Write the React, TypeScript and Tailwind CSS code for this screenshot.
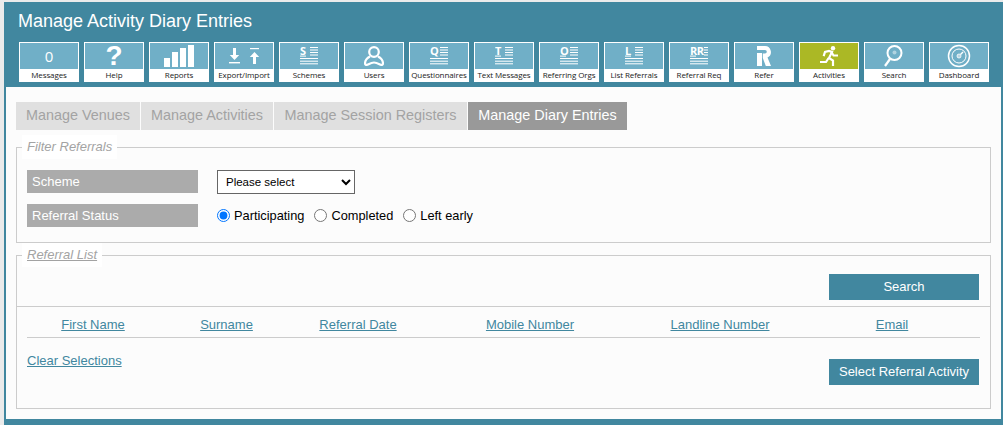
import React from 'react'

const teal = 'bg-[#41879f]'

// letter plus the ruled lines, shared by the list style icons
const Lines = ({ letter, wide, under }: { letter: string; wide?: boolean; under?: boolean }) => {
  const x = wide ? 14 : 10
  return (
    <svg width="18" height="26" viewBox="0 -3 18 26" fill="#fff">
      <text x="0" y="9" fontFamily="Open Sans, sans-serif" fontSize="11" fontWeight="700" letterSpacing={wide ? '-0.4' : '0'}>
        {letter}
      </text>
      {under && <rect x="0" y="9.600" width="6" height="1" />}
      <rect x={x} y="1" width={18 - x} height="1" />
      <rect x={x} y="3.500" width={18 - x} height="1" />
      <rect x={x} y="6" width={18 - x} height="1" />
      <rect x={x} y="8.500" width={18 - x} height="1" />
      <rect x="0" y="12" width="18" height="1" />
      <rect x="0" y="14.700" width="18" height="1" />
      <rect x="0" y="17.300" width="18" height="1" />
    </svg>
  )
}

const Bars = () => (
  <svg width="30" height="22" viewBox="0 0 30 22" fill="#fff">
    <rect x="0" y="13" width="6" height="9" />
    <rect x="8" y="7" width="6" height="15" />
    <rect x="16" y="3" width="6" height="19" />
    <rect x="24" y="0" width="6" height="22" />
  </svg>
)

const ExportImport = () => (
  <svg width="32" height="18" viewBox="0 0 32 18" fill="#fff">
    <path d="M5 1h3v7h3.200L6.500 13 1.800 8H5z" />
    <rect x="1" y="15" width="11" height="1.400" />
    <rect x="22" y="1" width="9" height="1.200" />
    <path d="M26.500 5l4.700 5H28v7h-3v-7h-3.200z" />
  </svg>
)

const User = () => (
  <svg width="20" height="20" viewBox="0 0 20 20" fill="none" stroke="#fff" strokeWidth="2.200">
    <circle cx="10" cy="6" r="4.800" />
    <path d="M6 10.500C3 12 1 15 1 17.500c0 1.500 1.500 1.800 3 1C6 17.500 8 16.500 10 16.500s4 1 6 2c1.500.8 3 .5 3-1 0-2.500-2-5.500-5-7" />
  </svg>
)

const Refer = () => (
  <svg width="14" height="20" viewBox="0 0 14 20" fill="#fff">
    <path d="M0 0h8a6 6 0 0 1 2.500 11.400L14 20H8.800L5.800 12V7.600H8a1.800 1.800 0 0 0 0-3.600H0z" />
    <rect x="0" y="7" width="5" height="13" />
  </svg>
)

const Runner = () => (
  <svg width="18" height="20" viewBox="0 0 18 20" fill="none" stroke="#fff" strokeWidth="2.200" strokeLinecap="square">
    <circle cx="13" cy="2.200" r="2.200" fill="#fff" stroke="none" />
    <path d="M4 9l1-3 4-1 3 1-3 6 4 2.500V19" />
    <path d="M12 7l1.500 2.500H17" />
    <path d="M8 13l-2 3H1" />
  </svg>
)

const Magnifier = () => (
  <svg width="20" height="22" viewBox="0 0 20 22" fill="none" stroke="#fff">
    <circle cx="10.500" cy="8" r="7" strokeWidth="2" />
    <circle cx="10.500" cy="7.500" r="2" fill="#fff" fillOpacity="0.45" stroke="none" />
    <path d="M6 14L1 21" strokeWidth="2.200" />
  </svg>
)

const Gauge = () => (
  <svg width="24" height="24" viewBox="0 0 24 24" fill="none" stroke="#fff">
    <circle cx="12" cy="12" r="10.500" strokeWidth="1.500" />
    <circle cx="12" cy="12" r="7" strokeWidth="1" />
    <circle cx="12" cy="12" r="2" fill="#fff" fillOpacity="0.5" strokeWidth="0.800" />
    <path d="M13.500 10.500L16 8" strokeWidth="1.500" />
  </svg>
)

const tiles: { label: string; icon: React.ReactNode; active?: boolean }[] = [
  { label: 'Messages', icon: <span className="font-['Open_Sans',sans-serif] text-[15px] leading-[26px] text-white">0</span> },
  { label: 'Help', icon: <span className="font-['Liberation_Sans',sans-serif] text-[28px] font-bold leading-[26px] text-white">?</span> },
  { label: 'Reports', icon: <Bars /> },
  { label: 'Export/Import', icon: <ExportImport /> },
  { label: 'Schemes', icon: <Lines letter="S" under /> },
  { label: 'Users', icon: <User /> },
  { label: 'Questionnaires', icon: <Lines letter="Q" /> },
  { label: 'Text Messages', icon: <Lines letter="T" under /> },
  { label: 'Referring Orgs', icon: <Lines letter="O" under /> },
  { label: 'List Referrals', icon: <Lines letter="L" under /> },
  { label: 'Referral Req', icon: <Lines letter="RR" wide under /> },
  { label: 'Refer', icon: <Refer /> },
  { label: 'Activities', icon: <Runner />, active: true },
  { label: 'Search', icon: <Magnifier /> },
  { label: 'Dashboard', icon: <Gauge /> },
]

const tabs = [
  { label: 'Manage Venues', w: 'w-[124px]' },
  { label: 'Manage Activities', w: 'w-[132px]' },
  { label: 'Manage Session Registers', w: 'w-[193px]' },
]

const columns = [
  { label: 'First Name', w: 'w-[132px]' },
  { label: 'Surname', w: 'w-[135px]' },
  { label: 'Referral Date', w: 'w-[128px]' },
  { label: 'Mobile Number', w: 'w-[216px]' },
  { label: 'Landline Number', w: 'w-[164px]' },
  { label: 'Email', w: 'w-[178px] pl-[2px]' },
]

const Tile = ({ label, icon, active }: { label: string; icon: React.ReactNode; active?: boolean }) => (
  <div className="flex h-[40px] w-[60px] shrink-0 flex-col border border-white bg-white">
    <div className={`flex h-[26px] items-center justify-center ${active ? 'bg-[#abb825]' : 'bg-[#70afc7]'}`}>
      {icon}
    </div>
    <div className="flex flex-1 items-center justify-center whitespace-nowrap font-['Open_Sans',sans-serif] text-[8px] leading-none tracking-[-0.1px] text-[#222]">
      {label}
    </div>
  </div>
)

const Radio = ({ label, checked }: { label: string; checked?: boolean }) => (
  <label className="flex items-center">
    <input type="radio" name="status" defaultChecked={checked} className="m-0 mr-[4px] h-[13px] w-[13px]" />
    <span>{label}</span>
  </label>
)

const App = () => (
  <div className="h-[425px] w-[1003px] overflow-hidden bg-[#ebebeb] pl-[4px] pt-[2px] font-['Liberation_Sans',sans-serif]">
    <div className={`${teal} h-[423px] w-[999px] px-[2px]`}>
      <h1 className="pl-[12px] pt-[9px] text-[18px] leading-[21px] text-white">Manage Activity Diary Entries</h1>
      <div className="flex gap-[5px] pl-[13px] pt-[10px]">
        {tiles.map((t) => (
          <Tile key={t.label} {...t} />
        ))}
      </div>
      <main className="mt-[5px] h-[332px] bg-[#fcfcfc] px-[10px] pt-[15px] text-[13px] text-black">
        <div className="flex gap-px text-[14.4px] text-[#a3a3a3]">
          {tabs.map((t) => (
            <div key={t.label} className={`flex h-[28px] items-center justify-center bg-[#e0e0e0] ${t.w}`}>
              {t.label}
            </div>
          ))}
          <div className="flex h-[28px] w-[159px] items-center justify-center bg-[#999] text-white">Manage Diary Entries</div>
        </div>

        <fieldset className="mt-[5px] h-[108px] border border-[#ccc] px-[10px]">
          <legend className="ml-[-5px] bg-white px-[5px] text-[13px] italic leading-[24px] text-[#a3a3a3]">Filter Referrals</legend>
          <div className="mt-[11px] flex items-start">
            <div className="flex h-[23px] w-[171px] items-center bg-[#ababab] pl-[5px] text-white">Scheme</div>
            <select className="ml-[19px] h-[24px] w-[138px] border border-[#666] bg-white pl-[4px] text-[11.5px] text-black">
              <option>Please select</option>
            </select>
          </div>
          <div className="mt-[10px] flex items-center">
            <div className="flex h-[23px] w-[171px] items-center bg-[#ababab] pl-[5px] text-white">Referral Status</div>
            <div className="ml-[19px] flex gap-[10px] text-[12.8px]">
              <Radio label="Participating" checked />
              <Radio label="Completed" />
              <Radio label="Left early" />
            </div>
          </div>
        </fieldset>

        <fieldset className="h-[166px] border border-[#ccc]">
          <legend className="ml-[5px] bg-white px-[5px] text-[13px] italic leading-[24px] text-[#a3a3a3] underline">Referral List</legend>
          <div className="flex h-[40px] items-start justify-end border-b border-[#ccc] pr-[11px] pt-[7px]">
            <button className={`${teal} h-[26px] w-[150px] text-white`}>Search</button>
          </div>
          <div className="mx-[10px] flex h-[31px] items-center border-b border-[#ccc] pt-[6px] text-[#41879f] underline">
            {columns.map((c) => (
              <div key={c.label} className={`${c.w} shrink-0 text-center`}>
                {c.label}
              </div>
            ))}
          </div>
          <div className="flex items-start justify-between pl-[10px] pr-[11px]">
            <a className="mt-[13px] text-[#41879f] underline">Clear Selections</a>
            <button className={`${teal} mt-[21px] h-[26px] w-[150px] text-white`}>Select Referral Activity</button>
          </div>
        </fieldset>
      </main>
    </div>
  </div>
)

export default App
